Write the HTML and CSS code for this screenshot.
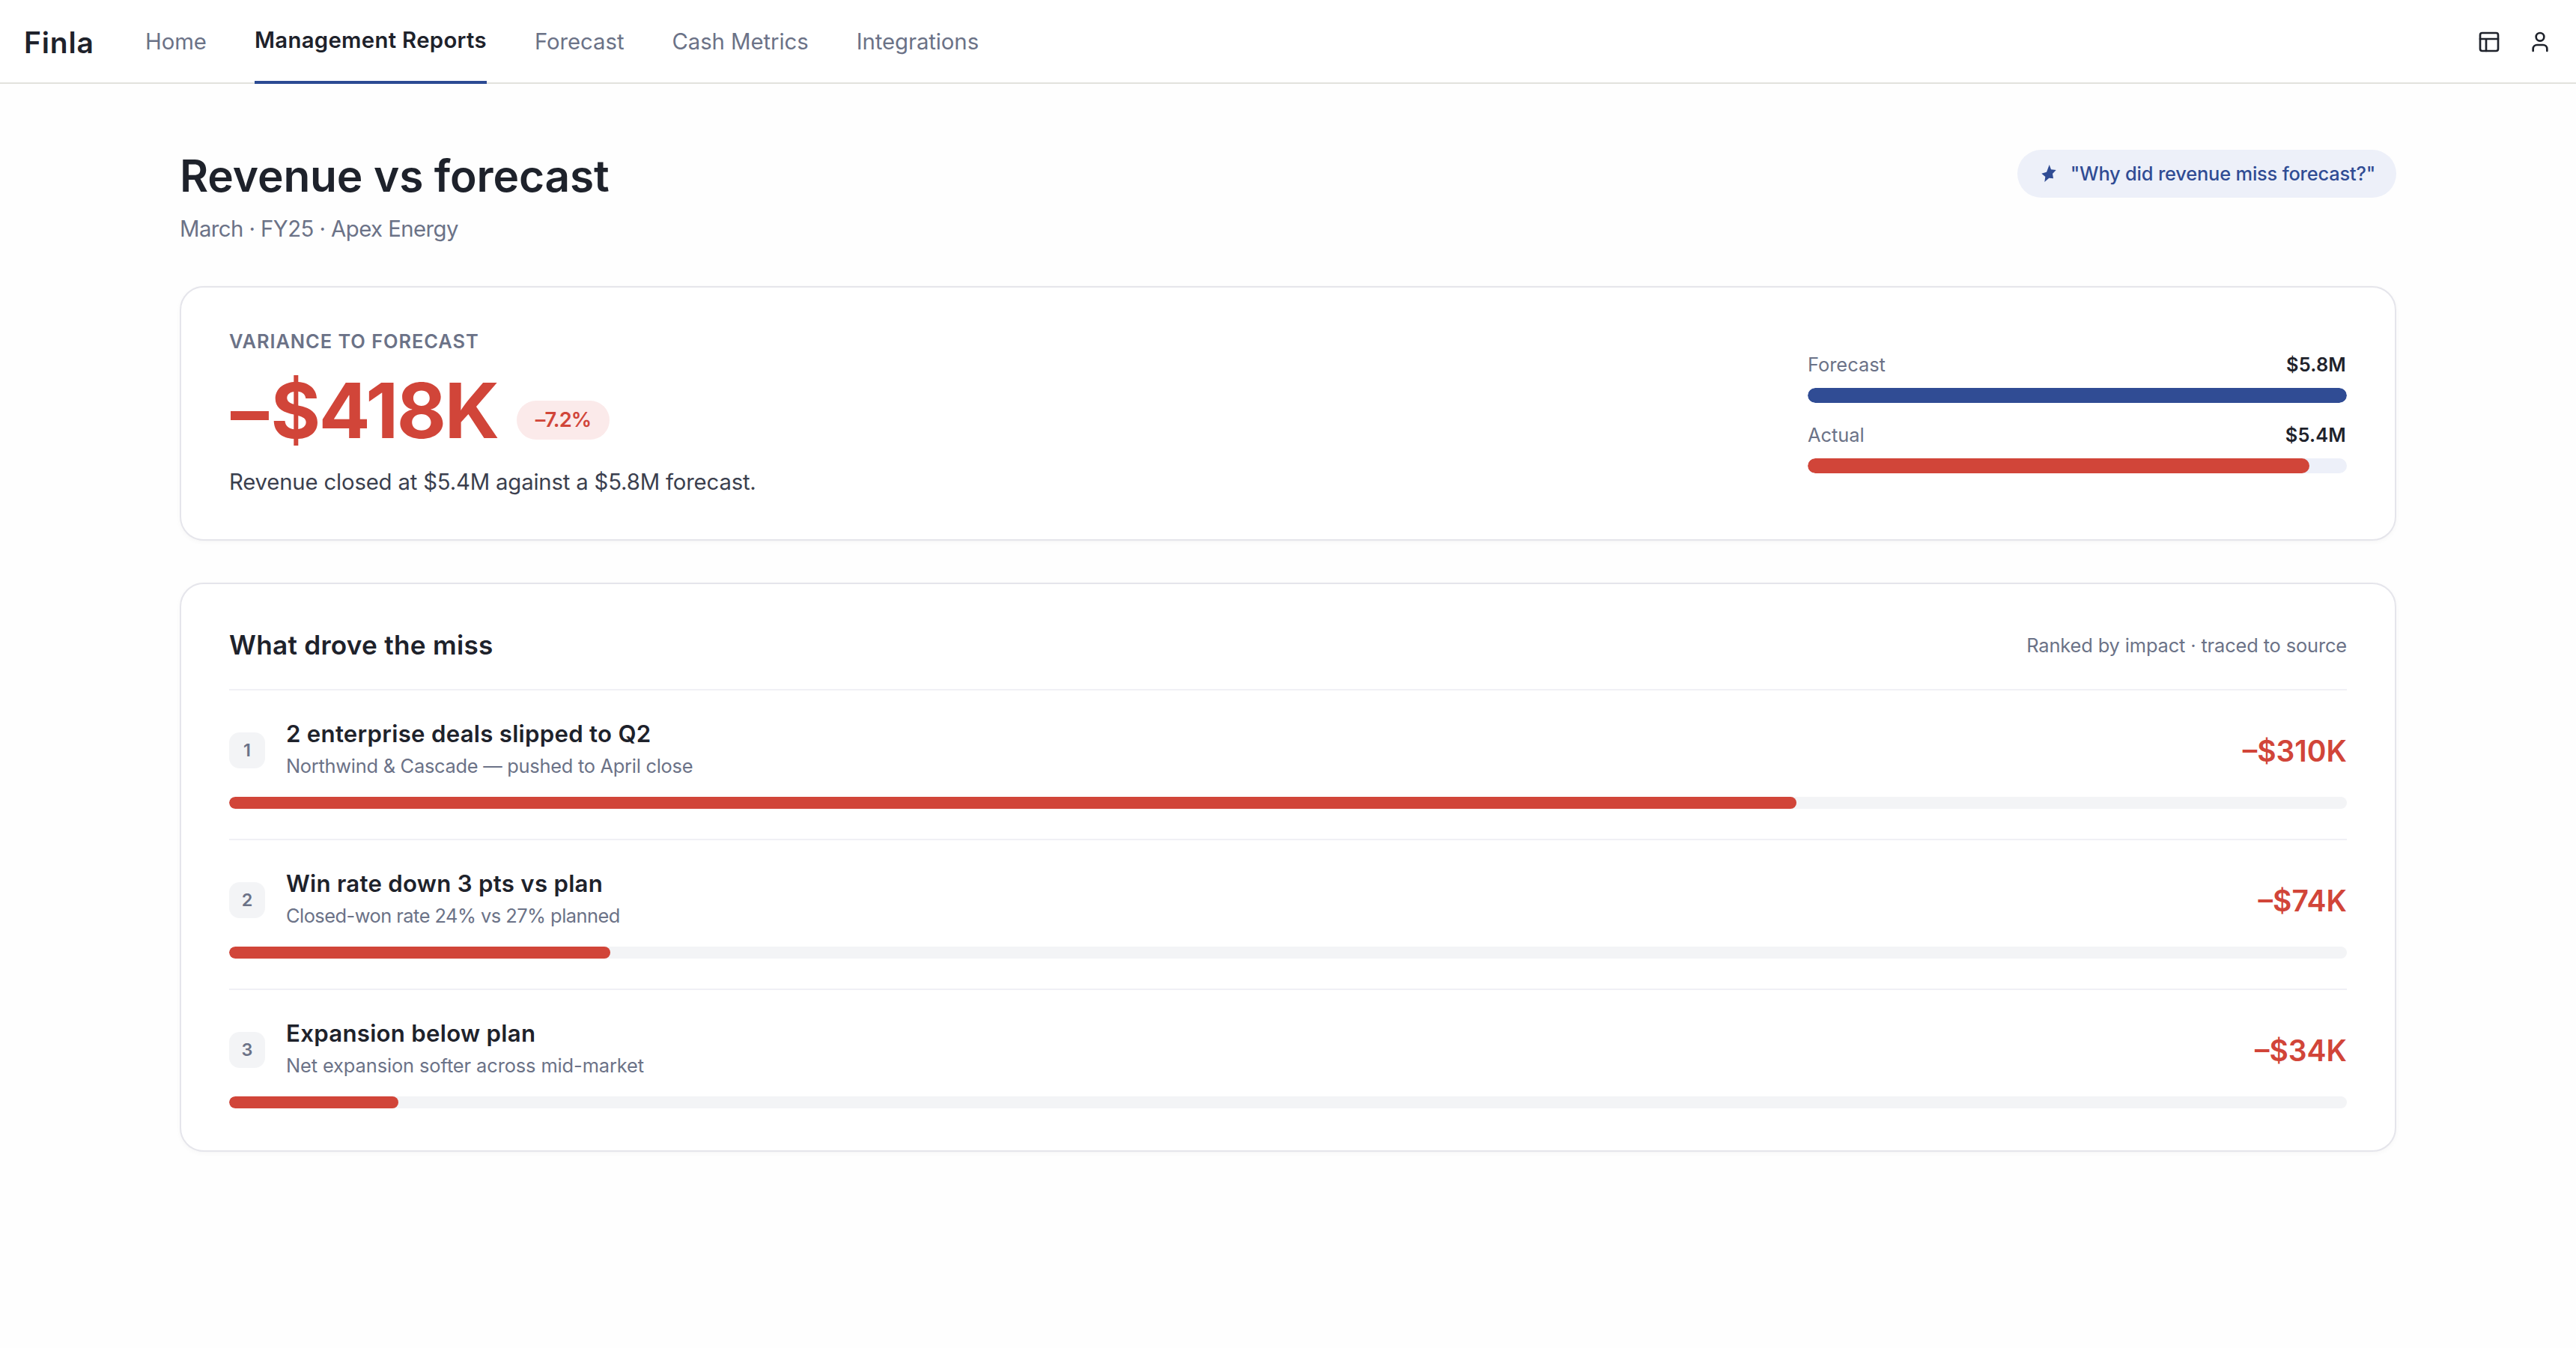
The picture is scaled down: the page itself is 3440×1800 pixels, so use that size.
FILE: index.html
```
<!DOCTYPE html>
<html lang="en">
<head>
<meta charset="utf-8">
<title>Finla – Revenue vs forecast</title>
<link rel="stylesheet" href="styles.css">
</head>
<body>
<header class="topbar">
  <div class="brand">Finla</div>
  <nav class="nav">
    <a class="nav-link">Home</a>
    <a class="nav-link active">Management Reports</a>
    <a class="nav-link">Forecast</a>
    <a class="nav-link">Cash Metrics</a>
    <a class="nav-link">Integrations</a>
  </nav>
  <div class="tools">
    <svg class="icon" viewBox="0 0 24 24"><rect x="3" y="3" width="18" height="18" rx="2"/><path d="M3 9h18M9 21V9"/></svg>
    <svg class="icon" viewBox="0 0 24 24"><path d="M19 21v-2a4 4 0 0 0-4-4H9a4 4 0 0 0-4 4v2"/><circle cx="12" cy="7" r="4"/></svg>
  </div>
</header>
<main class="page">
  <div class="page-head">
    <div>
      <h1 class="title">Revenue vs forecast</h1>
      <p class="subtitle">March · FY25 · Apex Energy</p>
    </div>
    <button class="ask">
      <svg class="star" viewBox="-2 1 26 28"><path d="M12.7 3 15 9.3 21.7 10 17 15 18 21.3 12.3 20.7 6.3 26 7.3 19 2.3 14.7 9 12.7Z"/></svg>
      <span>"Why did revenue miss forecast?"</span>
    </button>
  </div>

  <section class="card summary">
    <div>
      <div class="label">VARIANCE TO FORECAST</div>
      <div class="figure">
        <span class="amount-lg"><span class="sign">–</span>$418K</span>
        <span class="badge">–7.2%</span>
      </div>
      <p class="note">Revenue closed at $5.4M against a $5.8M forecast.</p>
    </div>
    <div class="compare">
      <div>
        <div class="compare-row"><span>Forecast</span><strong>$5.8M</strong></div>
        <div class="bar"><div class="fill blue" style="width:100%"></div></div>
      </div>
      <div>
        <div class="compare-row"><span>Actual</span><strong>$5.4M</strong></div>
        <div class="bar"><div class="fill" style="width:93.1%"></div></div>
      </div>
    </div>
  </section>

  <section class="card drivers">
    <div class="drivers-head">
      <h2>What drove the miss</h2>
      <span>Ranked by impact · traced to source</span>
    </div>
    <div class="driver">
      <div class="driver-row">
        <span class="rank">1</span>
        <div class="driver-text">
          <h3>2 enterprise deals slipped to Q2</h3>
          <p>Northwind &amp; Cascade — pushed to April close</p>
        </div>
        <span class="impact">–$310K</span>
      </div>
      <div class="track"><div class="fill" style="width:74%"></div></div>
    </div>
    <div class="driver">
      <div class="driver-row">
        <span class="rank">2</span>
        <div class="driver-text">
          <h3>Win rate down 3 pts vs plan</h3>
          <p class="tight">Closed-won rate 24% vs 27% planned</p>
        </div>
        <span class="impact">–$74K</span>
      </div>
      <div class="track"><div class="fill" style="width:18%"></div></div>
    </div>
    <div class="driver">
      <div class="driver-row">
        <span class="rank">3</span>
        <div class="driver-text">
          <h3>Expansion below plan</h3>
          <p class="loose">Net expansion softer across mid-market</p>
        </div>
        <span class="impact">–$34K</span>
      </div>
      <div class="track"><div class="fill" style="width:8%"></div></div>
    </div>
  </section>
</main>
</body>
</html>
```
FILE: styles.css
```
:root {
  --ink: #1e222b;
  --muted: #6b7287;
  --blue: #304c94;
  --red: #d14539;
}

* { box-sizing: border-box; margin: 0; padding: 0; }

body {
  min-height: 1800px;
  background: #fefefe;
  color: var(--ink);
  font-family: Inter, "Liberation Sans", sans-serif;
}

/* Top bar */
.topbar {
  display: flex;
  align-items: center;
  height: 112px;
  padding: 0 32px;
  background: #fff;
  box-shadow: inset 0 -2px #e2e2dd;
}
.brand {
  width: 162px;
  font-size: 39px;
  font-weight: 600;
  letter-spacing: 0.8px;
}
.nav { display: flex; gap: 64px; height: 112px; }
.nav-link {
  font-size: 29.3px;
  line-height: 111px;
  color: var(--muted);
  letter-spacing: -0.05px;
}
.nav-link.active {
  line-height: 107px;
  border-bottom: 4px solid #2b4a93;
  color: var(--ink);
  font-weight: 600;
  letter-spacing: 0.33px;
}
.tools { display: flex; gap: 36px; margin-left: auto; }
.icon {
  width: 32px;
  height: 32px;
  fill: none;
  stroke: var(--ink);
  stroke-width: 2;
  stroke-linecap: round;
  stroke-linejoin: round;
}

/* Page heading */
.page { width: 2960px; margin: 0 auto; padding-top: 88px; }
.page-head {
  display: flex;
  justify-content: space-between;
  align-items: flex-start;
  height: 125px;
  margin-bottom: 57px;
}
.title {
  font-size: 58.6px;
  font-weight: 600;
  line-height: 70px;
  letter-spacing: -0.15px;
}
.subtitle {
  margin-top: 16px;
  font-size: 29.3px;
  line-height: 40px;
  letter-spacing: -0.54px;
  color: var(--muted);
}
.ask {
  display: flex;
  align-items: center;
  justify-content: space-between;
  width: 506px;
  height: 64px;
  padding: 0 28px;
  border: 0;
  border-radius: 32px;
  background: #edf0f9;
  color: var(--blue);
  font: 500 25.4px Inter, "Liberation Sans", sans-serif;
  letter-spacing: -0.18px;
  white-space: nowrap;
}
.ask span { padding-bottom: 2px; }
.star { width: 26px; height: 28px; fill: currentColor; }

/* Cards */
.card {
  border: 2px solid #e5e5eb;
  border-radius: 32px;
  background: #fff;
  box-shadow: 0 2px 6px rgba(20, 24, 40, 0.035);
}
.summary {
  display: flex;
  justify-content: space-between;
  align-items: center;
  height: 340px;
  padding: 0 64px;
}
.label {
  font-size: 25.4px;
  font-weight: 600;
  line-height: 32px;
  letter-spacing: 0.95px;
  color: var(--muted);
}
.figure { display: flex; gap: 24px; margin-top: 24px; }
.amount-lg {
  width: 360px;
  color: var(--red);
  font-size: 101.8px;
  font-weight: 650;
  line-height: 104px;
  letter-spacing: -2.4px;
  white-space: nowrap;
}
.sign { margin: 0 5px 0 2px; }
.badge {
  align-self: flex-end;
  width: 124px;
  margin-bottom: 13px;
  border-radius: 26px;
  background: #fbeaea;
  color: var(--red);
  font-size: 27.3px;
  font-weight: 600;
  line-height: 52px;
  letter-spacing: -0.9px;
  text-align: center;
}
.note {
  margin-top: 24px;
  font-size: 29.3px;
  line-height: 40px;
  letter-spacing: -0.17px;
  color: #3b3f4e;
}
.compare { display: grid; gap: 27px; width: 720px; padding-bottom: 1px; }
.compare-row {
  display: flex;
  justify-content: space-between;
  margin-bottom: 15px;
  font-size: 25.4px;
  line-height: 32px;
  color: var(--muted);
}
.compare-row strong { padding-right: 1px; color: var(--ink); font-weight: 600; letter-spacing: 0.2px; }
.bar, .track { overflow: hidden; }
.bar { height: 20px; border-radius: 10px; background: #edf0f9; }
.track { height: 16px; border-radius: 8px; background: #f3f4f6; }
.fill { height: 100%; border-radius: inherit; background: var(--red); }
.fill.blue { background: var(--blue); }

/* Drivers */
.drivers { height: 760px; margin-top: 56px; padding: 59px 64px 0; }
.drivers-head {
  display: flex;
  justify-content: space-between;
  align-items: center;
  height: 44px;
  margin-bottom: 37px;
}
.drivers-head h2 { font-size: 35.2px; font-weight: 600; line-height: 44px; letter-spacing: 0.25px; }
.drivers-head span { font-size: 25.4px; letter-spacing: -0.13px; color: var(--muted); }
.driver { height: 200px; padding-top: 38px; border-top: 2px solid #f0f0f5; }
.driver-row { display: flex; align-items: center; height: 84px; margin-bottom: 20px; }
.rank {
  width: 48px;
  margin-right: 28px;
  border-radius: 14px;
  background: #f3f4f6;
  color: var(--muted);
  font-size: 23.4px;
  font-weight: 600;
  line-height: 48px;
  text-align: center;
}
.driver-text { height: 84px; }
.driver-text h3 { font-size: 31.2px; font-weight: 600; line-height: 40px; letter-spacing: 0.27px; }
.driver-text p {
  margin-top: 7px;
  font-size: 25.4px;
  line-height: 32px;
  letter-spacing: -0.26px;
  color: var(--muted);
}
.driver-text .tight { letter-spacing: -0.52px; }
.driver-text .loose { letter-spacing: -0.1px; }
.impact {
  margin-left: auto;
  color: var(--red);
  font-size: 39px;
  font-weight: 600;
}
```
